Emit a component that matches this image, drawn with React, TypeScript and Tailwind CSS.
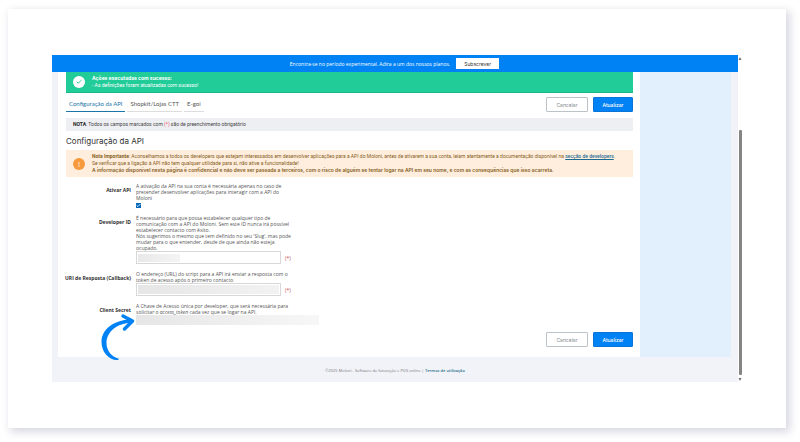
import { useState, type ReactNode } from 'react';
import { Check } from 'lucide-react';

const tabs = ['Configuração da API', 'Shopkit/Lojas CTT', 'E-goi'];

function Actions() {
  return (
    <div className="flex gap-[5px] font-[Inter,sans-serif] text-[5px] leading-[6px]">
      <button className="h-[15px] w-[42px] rounded-[1px] border border-[#bcc3c8] bg-white text-[#858b90]">
        Cancelar
      </button>
      <button className="h-[15px] w-10 rounded-[1px] border border-[#0b74d8] bg-[#0082f5] font-medium text-white">
        Atualizar
      </button>
    </div>
  );
}

type FieldProps = { id: string; label: string; help: ReactNode; children: ReactNode };

function Field({ id, label, help, children }: FieldProps) {
  return (
    <div className="grid grid-cols-[65px_1fr] gap-[5px]">
      <label htmlFor={id} className="flex justify-end pt-1 font-bold whitespace-nowrap text-[#303030]">
        {label}
      </label>
      <div>
        <p className="whitespace-nowrap">{help}</p>
        {children}
      </div>
    </div>
  );
}

export default function App() {
  const [active, setActive] = useState(0);
  const [enabled, setEnabled] = useState(true);

  return (
    <div className="min-h-screen bg-white pt-[9px] pr-[14px] pb-[14px] pl-2 font-['Open_Sans',sans-serif] text-[5px] leading-[6px] text-[#555]">
      <div className="bg-white pt-[46px] pr-11 pb-[46px] pl-11 shadow-[3px_3px_8px_1px_rgba(60,60,110,0.2)]">
        <div className="flex">
          <div className="min-w-0 flex-1 bg-[#f2f3f9]">
            <div className="flex h-[17px] items-center justify-center gap-[6px] bg-[#0082f5] pr-px text-white">
              <span>Encontra-se no período experimental. Adira a um dos nossos planos.</span>
              <button className="h-[11px] w-[43px] bg-white font-[Inter,sans-serif] text-[#333]">Subscrever</button>
            </div>

            <div className="flex pr-[7px] pl-[6px]">
              <main className="min-w-0 flex-1 bg-white pr-[7px] pb-[10px] pl-2">
                <div className="flex h-[21px] items-center gap-[7px] border-b border-[#1bb889] bg-[#22cc99] pl-[7px] text-white">
                  <span className="flex size-3 items-center justify-center rounded-full bg-white">
                    <Check className="size-[6px] text-[#22cc99]" strokeWidth={4} />
                  </span>
                  <div className="leading-[7px]">
                    <p className="font-[Inter,sans-serif] font-bold">Ações executadas com sucesso:</p>
                    <p className="font-[Roboto,sans-serif]">- As definições foram atualizadas com sucesso!</p>
                  </div>
                </div>

                <div className="mt-1 flex items-center justify-between">
                  <nav className="flex gap-[2px] font-[Lato,sans-serif] text-[6px] leading-[8px]">
                    {tabs.map((tab, i) => (
                      <button
                        key={tab}
                        onClick={() => setActive(i)}
                        className={
                          i === active
                            ? 'border-b border-[#1b75a8] px-[3px] pt-[2px] pb-[3px] text-[#1b75a8]'
                            : 'border-b border-[#dddddd] px-[3px] pt-[2px] pb-[3px] text-[#555]'
                        }
                      >
                        {tab}
                      </button>
                    ))}
                  </nav>
                  <Actions />
                </div>

                <p className="mt-[6px] bg-[#eeeff3] px-[7px] py-[3px] font-[Roboto,sans-serif] leading-[7px] text-[#444]">
                  <b className="text-[#222]">NOTA</b>: Todos os campos marcados com <span className="text-[#e8505b]">(*)</span> são
                  de preenchimento obrigatório
                </p>

                <h1 className="mt-[5px] font-[Inter,sans-serif] text-[8px] leading-[10px] text-[#303030]">Configuração da API</h1>

                <div className="mt-1 flex h-[27px] items-center gap-[7px] bg-[#ffeedd] pl-[7px] whitespace-nowrap text-[#85601d]">
                  <span className="flex size-3 shrink-0 items-center justify-center rounded-full bg-[#f79a3c] text-[8px] text-white">
                    !
                  </span>
                  <div className="font-[Roboto,sans-serif] leading-[7px]">
                    <p>
                      <b>Nota Importante</b>: Aconselhamos a todos os developers que estejam interessados em desenvolver aplicações
                      para a API do Moloni, antes de ativarem a sua conta, leiam atentamente a documentação disponível na{' '}
                      <a href="#developers" className="font-medium text-[#1b6b93] underline">
                        secção de developers
                      </a>
                      .
                    </p>
                    <p>Se verificar que a ligação à API não tem qualquer utilidade para si, não ative a funcionalidade!</p>
                    <p className="font-[Inter,sans-serif] font-semibold">
                      A informação disponível nesta página é confidencial e não deve ser passada a terceiros, com o risco de alguém se
                      tentar logar na API em seu nome, e com as consequências que isso acarreta.
                    </p>
                  </div>
                </div>

                <form className="mt-[6px] flex flex-col gap-[7px]">
                  <Field
                    id="ativar"
                    label="Ativar API"
                    help={
                      <>
                        A ativação da API na sua conta é necessária apenas no caso de
                        <br />
                        pretender desenvolver aplicações para interagir com a API do
                        <br />
                        Moloni
                      </>
                    }
                  >
                    <div className="mt-[2px] grid size-[5px]">
                      <input
                        id="ativar"
                        type="checkbox"
                        checked={enabled}
                        onChange={() => setEnabled(!enabled)}
                        className="col-start-1 row-start-1 size-[5px] appearance-none border border-[#0067b8] checked:bg-[#0067b8]"
                      />
                      {enabled && (
                        <Check className="pointer-events-none col-start-1 row-start-1 size-[5px] text-white" strokeWidth={4} />
                      )}
                    </div>
                  </Field>

                  <Field
                    id="developer-id"
                    label="Developer ID"
                    help={
                      <>
                        É necessário para que possa estabelecer qualquer tipo de
                        <br />
                        comunicação com a API do Moloni. Sem este ID nunca irá possível
                        <br />
                        estabelecer contacto com êxito.
                        <br />
                        Nós sugerimos o mesmo que tem definido no seu 'Slug', mas pode
                        <br />
                        mudar para o que entender, desde de que ainda não esteja
                        <br />
                        ocupado.
                      </>
                    }
                  >
                    <div className="flex items-center gap-1">
                      <div className="flex h-[13px] w-[145px] items-center border border-[#d8d8d8] px-px">
                        <input
                          id="developer-id"
                          className="h-2 w-[42px] bg-linear-to-r from-[#e9e9e9] to-[#f4f4f4] outline-none"
                        />
                      </div>
                      <span className="text-[#c0404a]">(*)</span>
                    </div>
                  </Field>

                  <Field
                    id="callback"
                    label="URI de Resposta (Callback)"
                    help={
                      <>
                        O endereço (URL) do script para a API irá enviar a resposta com o
                        <br />
                        token de acesso após o primeiro contacto
                      </>
                    }
                  >
                    <div className="flex items-center gap-1">
                      <div className="flex h-[13px] w-[145px] items-center border border-[#d8d8d8] px-px">
                        <input id="callback" className="h-[9px] w-full bg-linear-to-r from-[#e6e6e6] to-[#f2f2f2] outline-none" />
                      </div>
                      <span className="text-[#c0404a]">(*)</span>
                    </div>
                  </Field>

                  <div className="relative">
                    <Field
                      id="secret"
                      label="Client Secret"
                      help={
                        <>
                          A Chave de Acesso única por developer, que será necessária para
                          <br />
                          solicitar o <i>access_token</i> cada vez que se logar na API.
                        </>
                      }
                    >
                      <output
                        id="secret"
                        className="block h-[10px] w-[183px] bg-linear-to-r from-[#e6e6e6] via-[#eeeeee] to-[#f7f7f7]"
                      />
                    </Field>
                    <svg
                      viewBox="0 0 36 48"
                      className="absolute top-[10px] left-[34px] h-12 w-9"
                      fill="none"
                      stroke="#0082f5"
                      strokeLinejoin="round"
                    >
                      <path d="M23 3 L32.500 8 L24.500 16" strokeWidth="3.5" strokeLinecap="round" />
                      <path
                        d="M32 6 C14 7 1.500 16 1.500 29 C1.500 39 9 48 18.500 47 L18.500 45.500 C12 44 6.500 38 6.500 30 C6.500 19 17 10 32 9.800z"
                        fill="#0082f5"
                        stroke="none"
                      />
                    </svg>
                  </div>
                </form>

                <div className="mt-[7px] flex justify-end">
                  <Actions />
                </div>
              </main>
              <aside className="w-[91px] bg-[#e2f0fd]" />
            </div>

            <footer className="pt-[11px] pb-2 text-center text-[4px] text-[#777]">
              ©2025 Moloni - Software de faturação e POS online |{' '}
              <a href="#termos" className="font-semibold text-[#1b6b86]">
                Termos de utilização
              </a>
            </footer>
          </div>

          <div className="flex w-1 flex-col items-center pt-[2px]">
            <svg viewBox="0 0 4 3" className="h-[3px] w-1 shrink-0" fill="#707070">
              <path d="M0.500 3 L2 0 L3.500 3z" />
            </svg>
            <div className="flex-[70]" />
            <div className="w-[3px] flex-[246] rounded-[1px] bg-[#858585]" />
            <svg viewBox="0 0 4 3" className="mt-[3px] mb-px h-[3px] w-1 shrink-0" fill="#707070">
              <path d="M0.500 0 L2 3 L3.500 0z" />
            </svg>
          </div>
        </div>
      </div>
    </div>
  );
}
